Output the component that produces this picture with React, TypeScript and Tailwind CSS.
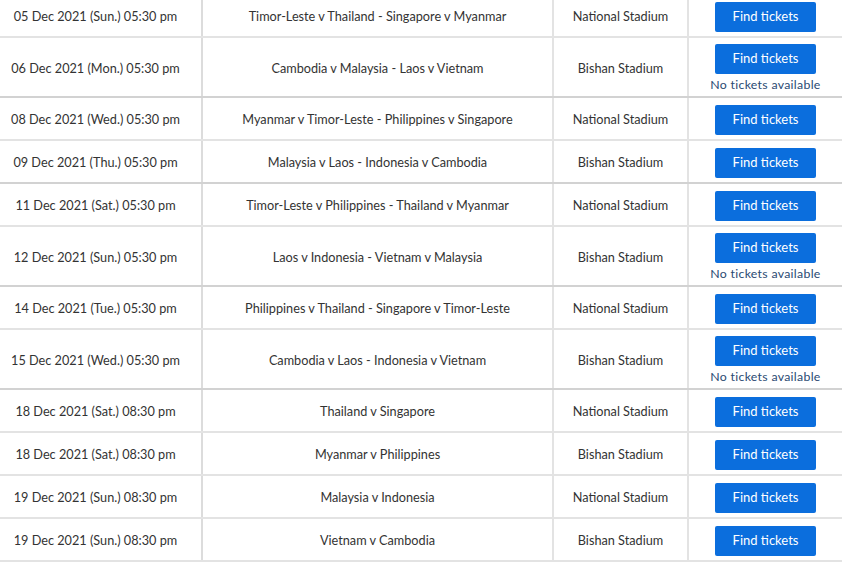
const rows = [
  { date: '05 Dec 2021 (Sun.) 05:30 pm', match: 'Timor-Leste v Thailand - Singapore v Myanmar', venue: 'National Stadium', none: false },
  { date: '06 Dec 2021 (Mon.) 05:30 pm', match: 'Cambodia v Malaysia - Laos v Vietnam', venue: 'Bishan Stadium', none: true, group: true },
  { date: '08 Dec 2021 (Wed.) 05:30 pm', match: 'Myanmar v Timor-Leste - Philippines v Singapore', venue: 'National Stadium', none: false },
  { date: '09 Dec 2021 (Thu.) 05:30 pm', match: 'Malaysia v Laos - Indonesia v Cambodia', venue: 'Bishan Stadium', none: false, group: true },
  { date: '11 Dec 2021 (Sat.) 05:30 pm', match: 'Timor-Leste v Philippines - Thailand v Myanmar', venue: 'National Stadium', none: false },
  { date: '12 Dec 2021 (Sun.) 05:30 pm', match: 'Laos v Indonesia - Vietnam v Malaysia', venue: 'Bishan Stadium', none: true, group: true },
  { date: '14 Dec 2021 (Tue.) 05:30 pm', match: 'Philippines v Thailand - Singapore v Timor-Leste', venue: 'National Stadium', none: false },
  { date: '15 Dec 2021 (Wed.) 05:30 pm', match: 'Cambodia v Laos - Indonesia v Vietnam', venue: 'Bishan Stadium', none: true, group: true },
  { date: '18 Dec 2021 (Sat.) 08:30 pm', match: 'Thailand v Singapore', venue: 'National Stadium', none: false },
  { date: '18 Dec 2021 (Sat.) 08:30 pm', match: 'Myanmar v Philippines', venue: 'Bishan Stadium', none: false },
  { date: '19 Dec 2021 (Sun.) 08:30 pm', match: 'Malaysia v Indonesia', venue: 'National Stadium', none: false },
  { date: '19 Dec 2021 (Sun.) 08:30 pm', match: 'Vietnam v Cambodia', venue: 'Bishan Stadium', none: false },
];

export default function App() {
  return (
    <div className="w-[842px] h-[563px] overflow-hidden bg-white text-[#333] text-[12.7px]" style={{ fontFamily: 'Lato, "Open Sans", sans-serif' }}>
      <div className="-mt-[5px]">
        {rows.map((r, i) => (
          <div
            key={i}
            className={`grid grid-cols-[203px_351px_135px_153px] border-b-2 ${r.group ? 'border-[#d2d2d2]' : 'border-[#e3e3e3]'} ${r.none ? 'h-[60px]' : 'h-[43px]'}`}
          >
            <div className="flex items-center justify-center pr-[10px] pt-[3px] border-r-2 border-[#dcdcdc]">{r.date}</div>
            <div className="flex items-center justify-center pt-[3px] border-r-2 border-[#e3e3e3]">{r.match}</div>
            <div className="flex items-center justify-center pt-[3px] border-r-2 border-[#e3e3e3]">{r.venue}</div>
            <div className={`flex flex-col items-center ${r.none ? 'pt-[6px]' : 'justify-center pt-[2px]'}`}>
              <button className="w-[101px] h-[30px] rounded-[2px] bg-[#0b6edd] text-white text-[13px]">Find tickets</button>
              {r.none && <div className="mt-[2px] text-[12.3px] text-[#2a4a72] tracking-[0.3px]">No tickets available</div>}
            </div>
          </div>
        ))}
      </div>
    </div>
  );
}
